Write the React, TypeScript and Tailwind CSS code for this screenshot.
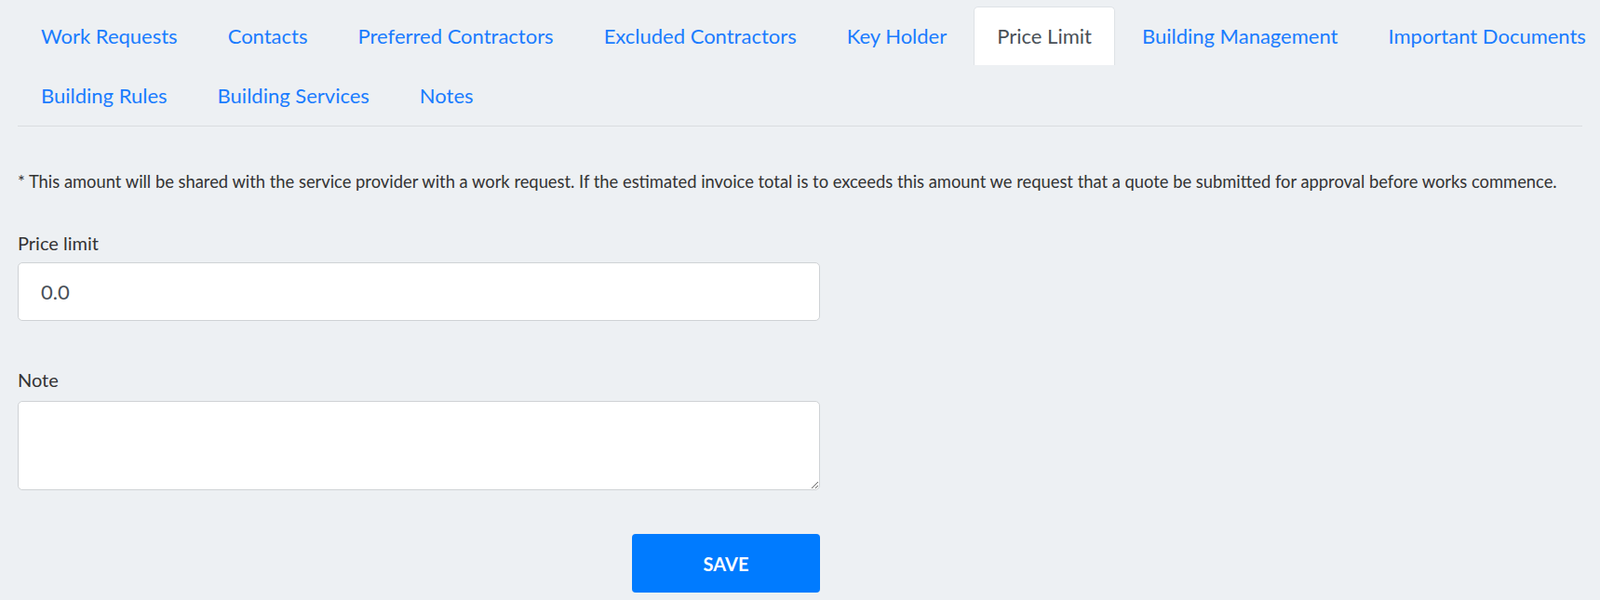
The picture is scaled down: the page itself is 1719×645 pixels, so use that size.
import React from "react";

const rows = [
  [
    "Work Requests",
    "Contacts",
    "Preferred Contractors",
    "Excluded Contractors",
    "Key Holder",
    "Price Limit",
    "Building Management",
    "Important Documents",
  ],
  ["Building Rules", "Building Services", "Notes"],
];

function Tab({ label, active }: { label: string; active?: boolean }) {
  return (
    <li className="mr-[4px] shrink-0 whitespace-nowrap">
      <a
        href="#"
        className={
          active
            ? "block rounded-t-[5px] border border-b-0 border-[#dee2e6] bg-white px-6 py-4 text-[22px] leading-[30px] text-[#495057]"
            : "block border border-transparent px-6 py-4 text-[22px] leading-[30px] text-[#1a7cff]"
        }
      >
        {label}
      </a>
    </li>
  );
}

export default function App() {
  return (
    <div
      className="min-h-[645px] overflow-hidden bg-[#edf0f3] px-[19px] pt-[7px]"
      style={{ fontFamily: "Lato, 'Open Sans', sans-serif" }}
    >
      <nav className="border-b border-[#dadde0]">
        {rows.map((row, i) => (
          <ul key={i} className="flex">
            {row.map((t) => (
              <Tab key={t} label={t} active={t === "Price Limit"} />
            ))}
          </ul>
        ))}
      </nav>

      <p className="mt-[46px] text-[18.35px] leading-[26px] text-[#333]">
        * This amount will be shared with the service provider with a work request. If the estimated invoice total is to
        exceeds this amount we request that a quote be submitted for approval before works commence.
      </p>

      <form className="mt-[39px] w-[862px]">
        <label className="block text-[20px] leading-[28px] text-[#333]">Price limit</label>
        <input
          type="text"
          defaultValue="0.0"
          className="mt-[7px] block h-[63px] w-full rounded-[5px] border border-[#cfd2d5] bg-white px-[24px] text-[22px] text-[#495057] outline-none"
        />

        <label className="mt-[49px] block text-[20px] leading-[28px] text-[#333]">Note</label>
        <textarea className="mt-[9px] block h-[96px] w-full rounded-[5px] border border-[#cfd2d5] bg-white px-[24px] py-3 text-[20px] outline-none" />

        <div className="mt-[47px] flex justify-end">
          <button
            type="button"
            className="h-[63px] w-[202px] rounded-[4px] bg-[#007bff] text-[20px] font-bold text-white"
          >
            SAVE
          </button>
        </div>
      </form>
    </div>
  );
}
